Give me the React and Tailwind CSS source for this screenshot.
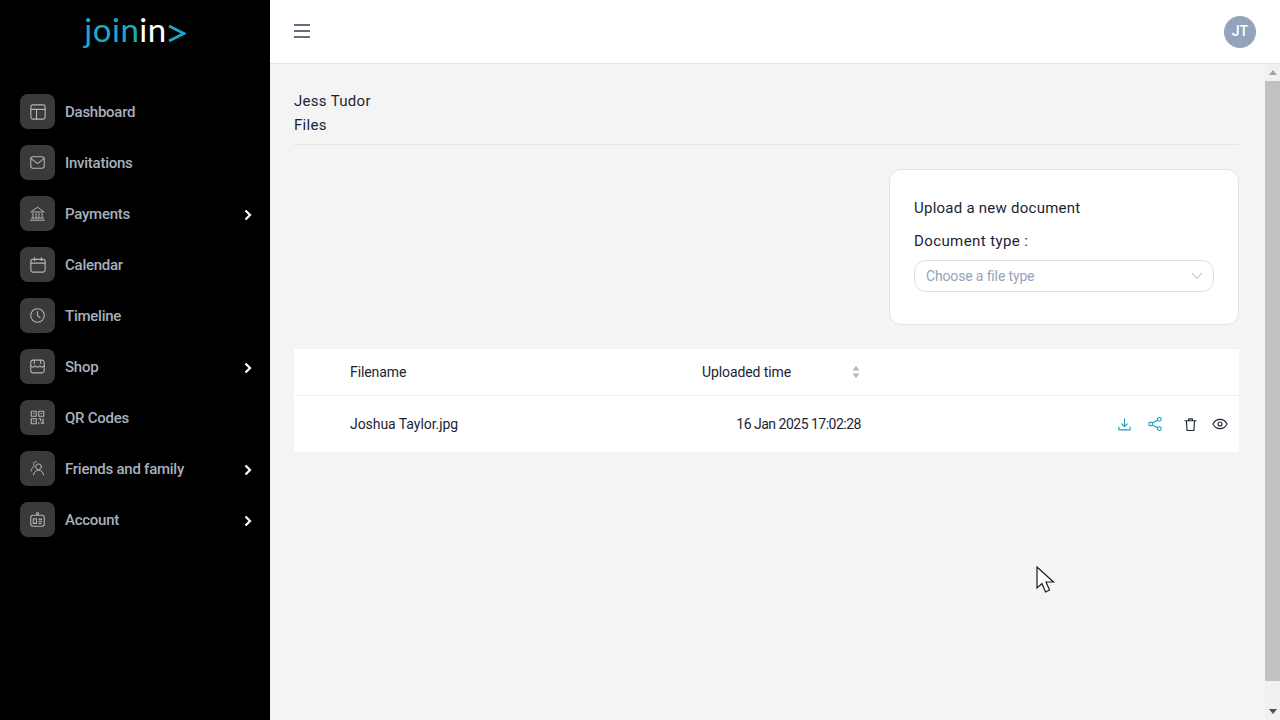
import React from "react";

const S = ({ children, size = 18, sw = 1.5, className = "" }) => (
  <svg width={size} height={size} viewBox="0 0 24 24" fill="none" stroke="currentColor" strokeWidth={sw} strokeLinecap="round" strokeLinejoin="round" className={className}>{children}</svg>
);

const icons = {
  dashboard: <S size={18}><rect x="2.5" y="2.5" width="19" height="19" rx="2.5" /><path d="M2.5 8.5h19M10 8.5v13" /></S>,
  mail: <S size={17}><rect x="2.5" y="4" width="19" height="16" rx="3" /><path d="M3 6.5l9 7 9-7" /></S>,
  bank: <S size={17} sw={1.4}><path d="M3 9.5L12 3l9 6.5zM5.5 12v6M10 12v6M14 12v6M18.5 12v6M3.5 18.5h17M2 21.5h20" /></S>,
  calendar: <S size={18}><rect x="2.5" y="4.5" width="19" height="17" rx="2.5" /><path d="M2.5 9.5h19M7.5 2v4M16.5 2v4" /></S>,
  clock: <S size={17}><circle cx="12" cy="12" r="9.5" /><path d="M12 6.5V12l3.5 3" /></S>,
  shop: <S size={17}><path d="M6 3h12a3.500 3.500 0 0 1 3.500 3.500v11A3.500 3.500 0 0 1 18 21H6a3.500 3.500 0 0 1-3.500-3.500v-11A3.500 3.500 0 0 1 6 3z" /><path d="M2.500 11c2 2.500 4.500 2.500 6.300 0 1.800 2.500 4.600 2.500 6.400 0 1.800 2.500 4.300 2.500 6.300 0M8 3l-.8 5M16 3l.8 5" /></S>,
  qr: <S size={15} sw={1.800}><rect x="2" y="2" width="8" height="8" /><rect x="14" y="2" width="8" height="8" /><rect x="2" y="14" width="8" height="8" /><path d="M5.500 5.500h1M17.500 5.500h1M5.500 17.500h1M14 14h3v3M21 14v3M14 20v2M18 21h4M20.500 18v1" /></S>,
  people: <S size={17} sw={1.4}><circle cx="13.500" cy="9.500" r="4" /><path d="M6.500 21c.5-4 3-6.500 7-6.500s6.500 2.500 7 6.500" /><path d="M10.500 2.500C8 2 6 4 6.500 6.500c.2 1 .6 1.700 1.200 2.300C5 10 3.500 12.500 3 15.500" /></S>,
  id: <S size={17} sw={1.5}><rect x="2.500" y="6" width="19" height="15.500" rx="3" /><circle cx="12" cy="3.500" r="1.500" /><rect x="6" y="11" width="4.500" height="6.500" /><path d="M14 11.500h4M14 14.500h4M14 17.500h3" /></S>,
};

const items = [
  ["Dashboard", "dashboard"],
  ["Invitations", "mail"],
  ["Payments", "bank", true],
  ["Calendar", "calendar"],
  ["Timeline", "clock"],
  ["Shop", "shop", true],
  ["QR Codes", "qr"],
  ["Friends and family", "people", true],
  ["Account", "id", true],
];

function NavItem({ label, icon, arrow }) {
  return (
    <div className="flex h-[35px] items-center">
      <div className="flex h-[35px] w-[35px] items-center justify-center rounded-lg bg-[#393a3a] text-[#b4b4b4]">{icons[icon]}</div>
      <span className="ml-[10px] mt-[2px] flex-1 text-[15px] font-medium tracking-[-0.25px] text-[#a7b1bd]">{label}</span>
      {arrow && (
        <svg width="8" height="12" viewBox="0 0 8 12" fill="none" stroke="#fff" strokeWidth="2.200" className="mr-[-2px] mt-[3px]"><path d="M1.500 1.500L6 6l-4.500 4.500" /></svg>
      )}
    </div>
  );
}

export default function App() {
  return (
    <div className="relative flex h-[720px] w-[1280px] overflow-hidden bg-[#f4f4f4] font-['Roboto','Liberation_Sans',sans-serif] text-[#1c2434]">
      <aside className="flex h-full w-[270px] shrink-0 flex-col bg-black">
        <div className="flex h-[64px] justify-center pt-[8px] font-['Lato',sans-serif] text-[33px] leading-[42px] font-normal tracking-[0.5px] text-[#1fa8c4]">
          <span>join</span><span className="text-white">in</span>
          <svg width="18" height="46" viewBox="0 0 18 46" fill="none" stroke="#1fa8c4" strokeWidth="2.800" className="ml-[1px]"><path d="M1 18L16 25.500 1 33" /></svg>
        </div>
        <nav className="mt-[30px] flex flex-col gap-[16px] pl-[20px] pr-[20px]">
          {items.map(([l, i, a]) => <NavItem key={l} label={l} icon={i} arrow={a} />)}
        </nav>
      </aside>

      <div className="flex min-w-0 flex-1 flex-col">
        <header className="flex h-[64px] shrink-0 items-center justify-between border-b border-[#e4e4e4] bg-white pl-[24px] pr-[24px]">
          <svg width="16" height="14" viewBox="0 0 16 14" stroke="#333f4f" strokeWidth="1.600" className="mt-[-2px]"><path d="M0 1h16M0 7h16M0 13h16" /></svg>
          <div className="flex h-[32px] w-[32px] items-center justify-center rounded-full bg-[#92a3ba] text-[14px] font-medium text-white">JT</div>
        </header>

        <div className="flex min-h-0 flex-1">
          <main className="min-w-0 flex-1 pl-[24px] pr-[26px] pt-[25px]">
            <div className="border-b border-[#e4e4e4] pb-[7px] text-[15px] leading-[24px] tracking-[0.3px] text-[#1c2434]">
              <div>Jess Tudor</div>
              <div>Files</div>
            </div>

            <div className="mt-[24px] flex justify-end">
              <div className="h-[156px] w-[350px] rounded-[12px] border border-[#e3e5ea] bg-white pl-[24px] pr-[24px] pt-[26px]">
                <div className="text-[15px] leading-[24px] tracking-[0.25px]">Upload a new document</div>
                <div className="mt-[9px] text-[15px] leading-[24px] tracking-[0.4px]">Document type :</div>
                <div className="mt-[7px] flex h-[32px] items-center justify-between rounded-[12px] border border-[#dcdfe4] pl-[11px] pr-[10px] text-[14px] tracking-[-0.15px] text-[#94a3b8]">
                  <span>Choose a file type</span>
                  <svg width="12" height="8" viewBox="0 0 12 8" fill="none" stroke="#a8b0bb" strokeWidth="1"><path d="M1 1l5 5.500L11 1" /></svg>
                </div>
              </div>
            </div>

            <div className="mt-[24px] bg-white text-[14px]">
              <div className="flex h-[47px] items-center border-b border-[#f1f1f3] pl-[56px]">
                <span className="w-[352px] tracking-[-0.1px]">Filename</span>
                <span className="w-[148px] tracking-[-0.1px]">Uploaded time</span>
                <svg width="10" height="14" viewBox="0 0 10 14" fill="#b5b5b5" className="ml-[1px]"><path d="M5 1l3.500 4.500h-7zM5 13L1.500 8.500h7z" /></svg>
              </div>
              <div className="flex h-[56px] items-center pl-[56px] pr-[11px]">
                <span className="w-[352px] tracking-[-0.05px]">Joshua Taylor.jpg</span>
                <span className="w-[159px] text-right tracking-[-0.5px]">16 Jan 2025 17:02:28</span>
                <div className="ml-auto flex items-center">
                  <span className="text-[#1f9cbc]"><S size={15} sw={1.800}><path d="M12 3v12M7.500 11l4.500 4.500L16.500 11M3 16v4.500h18V16" /></S></span>
                  <span className="ml-[15px] mr-[2px] text-[#1f9cbc]"><S size={16} sw={1.700}><circle cx="5.500" cy="12" r="2.800" /><circle cx="18.500" cy="5" r="2.800" /><circle cx="18.500" cy="19" r="2.800" /><path d="M8 10.500l8-4.200M8 13.500l8 4.200" /></S></span>
                  <span className="ml-[18px] text-[#1c2434]"><S size={15} sw={1.800}><path d="M3 6h18M9 6V3h6v3M5.500 6l1 15.500h11l1-15.500" /></S></span>
                  <span className="ml-[14px] text-[#1c2434]"><S size={16} sw={1.700}><path d="M1.500 12C4 7 7.500 5 12 5s8 2 10.500 7c-2.500 5-6 7-10.500 7s-8-2-10.500-7z" /><circle cx="12" cy="12" r="3" /></S></span>
                </div>
              </div>
            </div>
          </main>

          <div className="flex w-[15px] shrink-0 flex-col items-center bg-[#f1f1f1]">
            <div className="flex h-[17px] w-full items-center justify-center">
              <svg width="8" height="5" viewBox="0 0 8 5" fill="#a3a3a3"><path d="M4 0l4 5H0z" /></svg>
            </div>
            <div className="h-[600px] w-full bg-[#c1c1c1]" />
            <div className="flex flex-1 items-end justify-center pb-[6px]">
              <svg width="8" height="5" viewBox="0 0 8 5" fill="#505050"><path d="M4 5L0 0h8z" /></svg>
            </div>
          </div>
        </div>
      </div>

      <svg width="20" height="30" viewBox="0 0 20 30" className="absolute left-[1036px] top-[566px]">
        <path d="M1 1v21l5-4.500 3.500 8.500 4-2-3.500-8h7.500z" fill="#fff" stroke="#1a1a22" strokeWidth="1.200" strokeLinejoin="miter" />
      </svg>
    </div>
  );
}
